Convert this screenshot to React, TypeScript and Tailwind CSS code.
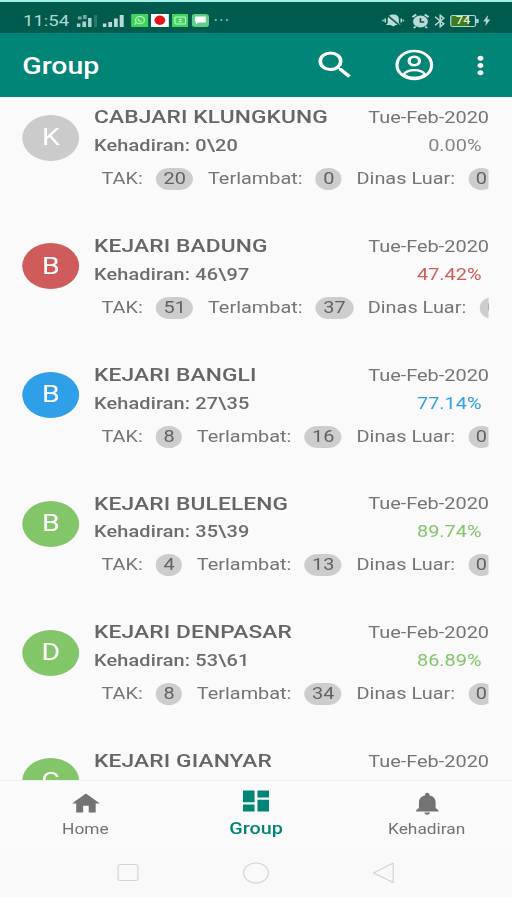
import clsx from "clsx";
import {
  MdBluetooth,
  MdBolt,
  MdDashboard,
  MdHome,
  MdMoreVert,
  MdNotifications,
  MdSearch,
} from "react-icons/md";

type Group = {
  name: string;
  initial: string;
  avatar: string;
  text?: string;
  present?: string;
  percent?: string;
  counts?: { label: string; value: string }[];
};

const counts = (tak: string, late: string, outside: string) => [
  { label: "TAK", value: tak },
  { label: "Terlambat", value: late },
  { label: "Dinas Luar", value: outside },
];

const groups: Group[] = [
  { name: "CABJARI KLUNGKUNG", initial: "K", present: "0\\20", percent: "0.00%", counts: counts("20", "0", "0"), avatar: "bg-[#cbcbcb]", text: "text-[#858585]" },
  { name: "KEJARI BADUNG", initial: "B", present: "46\\97", percent: "47.42%", counts: counts("51", "37", "0"), avatar: "bg-[#cf5b5b]", text: "text-[#cf5b5b]" },
  { name: "KEJARI BANGLI", initial: "B", present: "27\\35", percent: "77.14%", counts: counts("8", "16", "0"), avatar: "bg-[#2f9fe8]", text: "text-[#2f9fe8]" },
  { name: "KEJARI BULELENG", initial: "B", present: "35\\39", percent: "89.74%", counts: counts("4", "13", "0"), avatar: "bg-[#83c66a]", text: "text-[#83c66a]" },
  { name: "KEJARI DENPASAR", initial: "D", present: "53\\61", percent: "86.89%", counts: counts("8", "34", "0"), avatar: "bg-[#83c66a]", text: "text-[#83c66a]" },
  { name: "KEJARI GIANYAR", initial: "G", avatar: "bg-[#83c66a]" },
];

const StatusBar = () => (
  <div className="h-[31px] pt-px shrink-0 bg-[#005b4f] flex items-center justify-between pl-[18.600px] pr-[16px] text-[#b5d6d1]">
    <div className="pt-1 flex items-center">
      <span className="pt-px text-[15px] leading-5 w-[40px]">11:54</span>
      <svg viewBox="0 0 18 13" className="ml-[3.500px] w-[18px] h-[13px]" fill="#a9cfc9">
        <rect x="0" y="9.500" width="3" height="3.500" />
        <rect x="4.600" y="7.500" width="3" height="5.500" />
        <rect x="9.200" y="4" width="2.800" height="9" />
        <rect x="14" y="1" width="2.500" height="12" opacity="0.25" />
        <path d="M1 2.500h3v3H1zM5.200 1h2.800v4H5.200z" opacity="0.7" />
      </svg>
      <svg viewBox="0 0 18 13" className="ml-[3px] w-[18px] h-[13px]" fill="#b9dad5">
        <rect x="0" y="9.500" width="3" height="3.500" />
        <rect x="4.600" y="8" width="3" height="5" />
        <rect x="9.200" y="4.500" width="3" height="8.500" />
        <rect x="13.800" y="1" width="3.200" height="12" />
      </svg>
      <svg viewBox="0 0 14 13" preserveAspectRatio="none" className="ml-[5px] w-[14px] h-[13px]">
        <rect width="14" height="13" fill="#3fd45a" />
        <circle cx="7.200" cy="6.200" r="3.600" fill="none" stroke="#c9f7cf" />
        <path d="M3 10.500l1.300-2.500M5.500 5q.8 2.500 3 3" fill="none" stroke="#c9f7cf" />
      </svg>
      <svg viewBox="0 0 14 13" preserveAspectRatio="none" className="ml-[2px] w-[14.500px] h-[13px]">
        <rect width="14" height="13" fill="#fff" />
        <ellipse cx="7" cy="6.300" rx="4.200" ry="4.700" fill="#e3131b" />
      </svg>
      <svg viewBox="0 0 14 13" preserveAspectRatio="none" className="ml-[2px] w-[13.500px] h-[13px]">
        <rect width="14" height="13" fill="#3fd45a" />
        <rect x="2.500" y="3" width="9" height="7" rx="1" fill="none" stroke="#c9f7cf" />
        <path d="M7 4.500v4M5.500 5.500h3M5.500 7.500h3" stroke="#c9f7cf" strokeWidth="0.8" />
      </svg>
      <svg viewBox="0 0 14 13" preserveAspectRatio="none" className="ml-[2.500px] w-[14px] h-[13px]">
        <rect width="14" height="13" rx="3" fill="#5fce84" />
        <path d="M2.800 2.500h8.600v6H5.500L3.500 10.500V8.500h-.7z" fill="#fff" />
      </svg>
      <svg viewBox="0 0 12 4" className="ml-[4px] w-[12px] h-[4px]" fill="#8dbcb5">
        <circle cx="1.500" cy="2" r="0.9" />
        <circle cx="6" cy="2" r="0.9" />
        <circle cx="10.500" cy="2" r="0.9" />
      </svg>
    </div>
    <div className="pt-[5px] flex items-center">
      {/* muted bell */}
      <svg viewBox="0 0 18 16" className="w-[18px] h-4">
        <path d="M9 1.500c3 0 4.500 2 4.500 4.500v4l1.500 2H11q-2 2.500-4 0H3l1.500-2V6C4.500 3.500 6 1.500 9 1.500z" fill="#b9dad5" />
        <path d="M3.500 1.500l12 12.500" stroke="#005b4f" strokeWidth="1.400" />
        <path d="M2.500 5.500v4M.7 6.700v1.600M15.500 5.500v4M17.300 6.700v1.600" stroke="#b9dad5" strokeWidth="1.300" />
      </svg>
      <svg viewBox="0 0 16 16" className="ml-[5px] w-4 h-4">
        <circle cx="8" cy="8.500" r="6" fill="#b9dad5" />
        <path d="M1.500 4.200L4.500 1.500M14.500 4.200L11.500 1.500M4 13.500l-1.300 1.500M12 13.500l1.300 1.500" stroke="#b9dad5" strokeWidth="1.800" />
        <path d="M8 5v4h3" fill="none" stroke="#005b4f" strokeWidth="1.300" />
      </svg>
      <MdBluetooth className="h-4 w-4" stroke="currentColor" />
      <span className="relative w-[21px] h-[12px] border border-[#b5d6d1] rounded-[2px] flex items-center justify-center text-[10px] leading-none font-medium text-[#e5efcf] bg-linear-to-r from-[#3f7a1c] from-74% to-[#005b4f] to-74%">
        74
        <span className="absolute -right-[3px] top-[3px] h-[4px] w-[2px] bg-[#b5d6d1]" />
      </span>
      <MdBolt className="h-[13px] w-[13px] ml-[2px] -mr-[2px]" />
    </div>
  </div>
);

const Toolbar = () => (
  <div className="h-[64px] shrink-0 bg-[#008577] flex items-center justify-between pl-[18px] pr-[11px] text-white">
    <h1 className="pt-[2px] text-[23px] font-medium leading-none">Group</h1>
    <div className="flex items-center">
      <MdSearch className="h-[36px] w-[36px] mr-[30px]" />
      <svg viewBox="0 0 32 32" className="w-[32px] h-[32px] mr-[23px]" fill="none" stroke="#fff" strokeWidth="2.600">
        <circle cx="16" cy="16" r="14" />
        <circle cx="16" cy="12" r="4.200" />
        <path d="M7.500 25.500c1.500-3 5-4.300 8.500-4.300s7 1.300 8.500 4.300c-2 2-5 3.200-8.500 3.200s-6.500-1.200-8.500-3.200z" strokeWidth="2.300" />
      </svg>
      <MdMoreVert className="h-[29px] w-[29px]" />
    </div>
  </div>
);

const Count = ({ label, value }: { label: string; value: string }) => (
  <div className="flex items-center gap-[10.700px] shrink-0">
    <span>{label}:</span>
    <span className="h-[22px] px-[6px] rounded-full bg-[#cdcdcd] text-[#626262] leading-[22px]">
      {value}
    </span>
  </div>
);

const GroupRow = ({ group }: { group: Group }) => (
  <li className="h-[128.800px] pl-[18.200px] pr-[18.600px] flex text-[#757575]">
    <div
      className={clsx(
        "mt-[17.500px] pt-px h-[46px] w-[46px] shrink-0 rounded-full flex items-center justify-center text-white text-[23px]",
        group.avatar
      )}
    >
      {group.initial}
    </div>
    <div className="ml-[11.900px] pt-[8px] min-w-0 flex-1">
      <div className="h-6 flex items-center justify-between">
        <span className="text-[18.400px] tracking-[0.1px] font-medium text-[#666666]">{group.name}</span>
        <span className="pt-[2px] text-[16.100px]">Tue-Feb-2020</span>
      </div>
      {group.counts && (
        <>
          <div className="mt-[5px] h-6 flex items-center justify-between pr-[6px] text-[16.100px]">
            <span className="tracking-[0.1px] font-medium text-[#6c6c6c]">Kehadiran: {group.present}</span>
            <span className={group.text}>{group.percent}</span>
          </div>
          <div className="mt-[10px] ml-[6px] h-[22px] flex items-center gap-[11.800px] overflow-hidden whitespace-nowrap text-[16.100px]">
            {group.counts.map((count) => (
              <Count key={count.label} {...count} />
            ))}
          </div>
        </>
      )}
    </div>
  </li>
);

const BottomNav = () => (
  <nav className="h-[68px] shrink-0 border-t border-[#efefef] grid grid-cols-3 text-[#737373] text-[14px]">
    <div className="flex flex-col items-center pt-[9px]">
      <MdHome className="h-[27px] w-[27px]" />
      <span className="leading-[24px]">Home</span>
    </div>
    <div className="flex flex-col items-center pt-[6px] text-[#008577]">
      <MdDashboard className="h-[28px] w-[28px]" />
      <span className="leading-[27px] text-[16px] font-medium">Group</span>
    </div>
    <div className="flex flex-col items-center pt-[9px]">
      <MdNotifications className="h-[27px] w-[27px]" />
      <span className="leading-[24px]">Kehadiran</span>
    </div>
  </nav>
);

const SystemNav = () => (
  <div className="h-[49px] shrink-0 bg-[#f9f9f9] flex items-center justify-center gap-[81px]">
    <svg viewBox="0 0 22 22" className="w-[22px] h-[22px]" fill="none" stroke="#d4d4d4">
      <rect x="2.500" y="2.500" width="16" height="16" rx="2" />
    </svg>
    <svg viewBox="0 0 22 22" className="w-[22px] h-[22px]" fill="none" stroke="#d4d4d4">
      <circle cx="11" cy="11" r="10" />
    </svg>
    <svg viewBox="0 0 22 22" className="w-[22px] h-[22px]" fill="none" stroke="#d4d4d4" strokeLinejoin="round">
      <path d="M19 1v19.500L3 11z" />
    </svg>
  </div>
);

const App = () => (
  <div className="w-[512px] h-[900px] overflow-hidden bg-[#fafafa]">
    <div className="w-[414px] h-[900px] origin-top-left scale-x-[1.2367] flex flex-col font-[Roboto,sans-serif]">
      <div className="h-[2px] shrink-0 bg-[#a4efe3]" />
      <StatusBar />
      <Toolbar />
      <ul className="h-[683px] shrink-0 overflow-hidden">
        {groups.map((group) => (
          <GroupRow key={group.name} group={group} />
        ))}
      </ul>
      <BottomNav />
      <SystemNav />
      <div className="flex-1 bg-white" />
    </div>
  </div>
);

export default App;
